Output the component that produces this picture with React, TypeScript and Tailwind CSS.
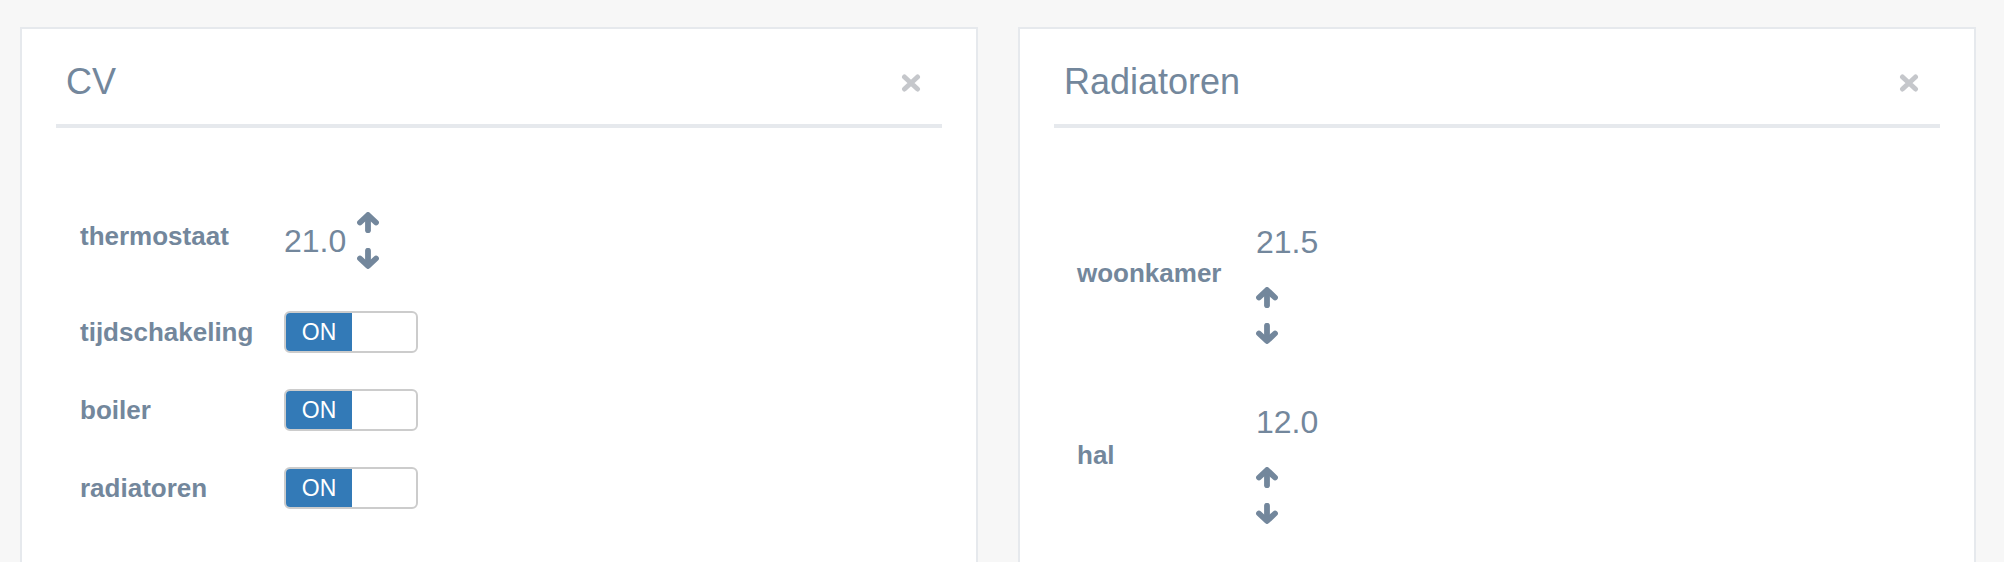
import React from "react";

const TEXT = "text-[#73879c]";

function ArrowUp() {
  return (
    <svg width="22" height="21" viewBox="0 0 22 21" className="block">
      <path d="M11 8 L11 18.3" stroke="#73879c" strokeWidth="5.8" strokeLinecap="round" fill="none" />
      <path d="M3 10.5 L11 3 L19 10.5" stroke="#73879c" strokeWidth="5.8" strokeLinecap="round" strokeLinejoin="round" fill="none" />
    </svg>
  );
}

function ArrowDown() {
  return (
    <svg width="22" height="21" viewBox="0 0 22 21" className="block">
      <path d="M11 13 L11 2.7" stroke="#73879c" strokeWidth="5.8" strokeLinecap="round" fill="none" />
      <path d="M3 10.5 L11 18 L19 10.5" stroke="#73879c" strokeWidth="5.8" strokeLinecap="round" strokeLinejoin="round" fill="none" />
    </svg>
  );
}

function CloseIcon() {
  return (
    <svg width="20" height="18" viewBox="0 0 20 18" className="block">
      <path d="M3.5 3 L16.5 15 M16.5 3 L3.5 15" stroke="#c5c7cb" strokeWidth="5" strokeLinecap="round" fill="none" />
    </svg>
  );
}

function Toggle() {
  return (
    <div className="flex h-[42px] w-[134px] overflow-hidden rounded-[6px] border-2 border-[#cccccc] bg-white">
      <div className="flex w-[66px] items-center justify-center bg-[#337ab7] text-[23px] leading-none text-white">
        ON
      </div>
    </div>
  );
}

function Header({ title }: { title: string }) {
  return (
    <div className="flex h-[79px] items-start justify-between border-b-4 border-[#e6e9ed] pl-[10px] pr-[21px]">
      <div className={`mt-[15px] text-[36px] leading-[36px] ${TEXT}`}>{title}</div>
      <div className="mt-[25px]">
        <CloseIcon />
      </div>
    </div>
  );
}

function Panel({ title, children }: { title: string; children: React.ReactNode }) {
  return (
    <div className="h-[600px] w-[958px] shrink-0 border-2 border-[#e6e9ed] bg-white px-[34px] pt-[20px]">
      <Header title={title} />
      {children}
    </div>
  );
}

function ToggleRow({ label, mt }: { label: string; mt: string }) {
  return (
    <div className={`flex h-[42px] items-center ${mt}`}>
      <div className={`ml-[24px] w-[204px] text-[26px] font-bold leading-[26px] ${TEXT}`}>{label}</div>
      <Toggle />
    </div>
  );
}

function RadRow({ label, value, mt, labelMt }: { label: string; value: string; mt: string; labelMt: string }) {
  return (
    <div className={`flex items-start ${mt}`}>
      <div className={`ml-[23px] w-[179px] text-[26px] font-bold leading-[26px] ${TEXT} ${labelMt}`}>{label}</div>
      <div className="flex flex-col">
        <div className={`text-[32px] leading-[32px] ${TEXT}`}>{value}</div>
        <div className="mt-[29px]">
          <ArrowUp />
        </div>
        <div className="mt-[15px]">
          <ArrowDown />
        </div>
      </div>
    </div>
  );
}

export default function App() {
  return (
    <div
      className="flex h-[562px] w-[2004px] gap-[40px] overflow-hidden bg-[#f7f7f7] pl-[20px] pt-[27px]"
      style={{ fontFamily: '"Liberation Sans", Arial, sans-serif' }}
    >
      <Panel title="CV">
        <div className="mt-[84px] flex items-center">
          <div className={`mb-[9px] ml-[24px] w-[204px] text-[26px] font-bold leading-[26px] ${TEXT}`}>thermostaat</div>
          <div className={`text-[32px] leading-[32px] ${TEXT}`}>21.0</div>
          <div className="ml-[11px] flex flex-col gap-[15px]">
            <ArrowUp />
            <ArrowDown />
          </div>
        </div>
        <ToggleRow label="tijdschakeling" mt="mt-[42px]" />
        <ToggleRow label="boiler" mt="mt-[36px]" />
        <ToggleRow label="radiatoren" mt="mt-[36px]" />
      </Panel>
      <Panel title="Radiatoren">
        <RadRow label="woonkamer" value="21.5" mt="mt-[98px]" labelMt="mt-[34px]" />
        <RadRow label="hal" value="12.0" mt="mt-[62px]" labelMt="mt-[36px]" />
      </Panel>
    </div>
  );
}
